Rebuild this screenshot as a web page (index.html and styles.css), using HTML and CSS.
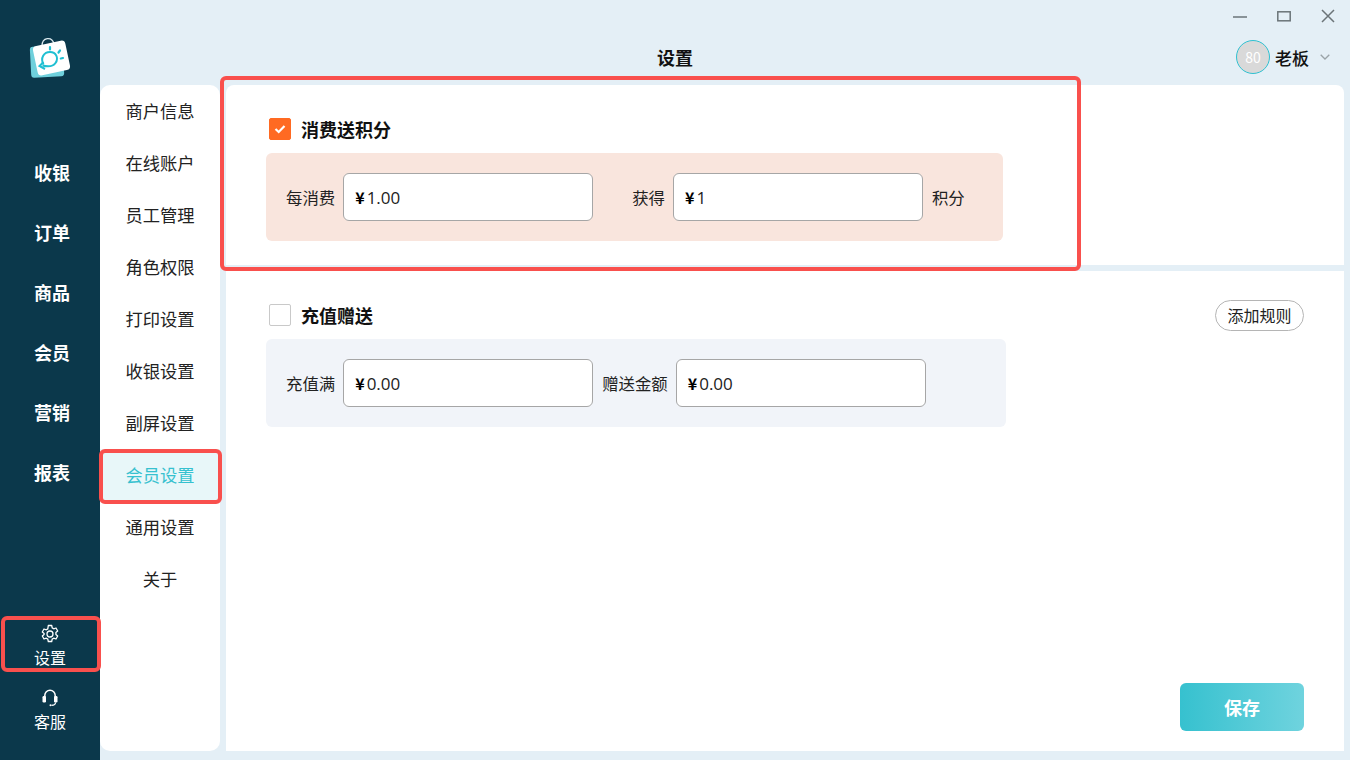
FILE: index.html
```html
<!DOCTYPE html>
<html lang="zh-CN">
<head>
<meta charset="utf-8">
<title>设置</title>
<link rel="stylesheet" href="styles.css">
</head>
<body>
<div class="app">
  <aside class="sidebar">
    <div class="logo">
      <svg width="44" height="44" viewBox="0 0 44 44" fill="none">
        <rect x="2.500" y="11" width="33" height="31" rx="3" fill="#6fd0dc" transform="rotate(-3 19 26)"/>
        <path d="M14 11 C14 2 24 1 26 9" stroke="#dbe9ee" stroke-width="1.300"/>
        <rect x="7" y="8" width="33" height="30" rx="4" fill="#fff" transform="rotate(-12 23.500 23)"/>
        <path d="M15.500 29.500 C12 23 16 17 22 17 C28 17 31 23 27.500 28 C25 31.500 20 32 14.500 30.500" stroke="#1fbfd2" stroke-width="2"/>
        <path d="M17 34 L11.500 31 L15.500 27" stroke="#1fbfd2" stroke-width="2"/>
        <path d="M22 12 L22 14.500 M32 15.500 L30.500 17.500 M35 23 L32.800 23.500" stroke="#1fbfd2" stroke-width="2.200" stroke-linecap="round"/>
      </svg>
    </div>
    <nav class="main-nav">
      <a class="main-item">收银</a>
      <a class="main-item">订单</a>
      <a class="main-item">商品</a>
      <a class="main-item">会员</a>
      <a class="main-item">营销</a>
      <a class="main-item">报表</a>
    </nav>
    <div class="side-bottom">
      <a class="side-tool">
        <svg width="20" height="20" viewBox="0 0 20 20" fill="none" stroke="#fff" stroke-width="1.300" stroke-linejoin="round">
          <path d="M8.300 1.500h3.400l.5 2.400 1.500.9 2.300-.8 1.700 3-1.800 1.600v1.800l1.800 1.600-1.700 3-2.300-.8-1.500.9-.5 2.400H8.300l-.5-2.400-1.500-.9-2.300.8-1.700-3 1.800-1.600V9.600L2.300 8l1.700-3 2.300.8 1.500-.9z"/>
          <circle cx="10" cy="10" r="3"/>
        </svg>
        <span>设置</span>
      </a>
      <a class="side-tool">
        <svg width="20" height="20" viewBox="0 0 20 20" fill="none">
          <path d="M4.800 9.500V7.500a5.200 5.200 0 0 1 10.400 0v2" stroke="#fff" stroke-width="1.500"/>
          <rect x="2.500" y="8" width="3.500" height="6.500" rx="1.200" fill="#fff"/>
          <rect x="14" y="8" width="3.500" height="6.500" rx="1.200" fill="#fff"/>
          <path d="M15.500 14.500c0 2-2 2.800-4 2.800" stroke="#fff" stroke-width="1.200"/>
          <circle cx="10.500" cy="17.300" r="1" fill="#fff"/>
        </svg>
        <span>客服</span>
      </a>
    </div>
  </aside>

  <div class="content">
    <div class="titlebar">
      <svg class="win" width="14" height="14" viewBox="0 0 14 14"><path d="M0 8h14" stroke="#6b7478" stroke-width="1.500"/></svg>
      <svg class="win" width="14" height="14" viewBox="0 0 14 14" fill="none"><rect x=".8" y="2.800" width="12.400" height="9" stroke="#6b7478" stroke-width="1.500"/></svg>
      <svg class="win" width="14" height="14" viewBox="0 0 14 14"><path d="M1 1l12 12M13 1L1 13" stroke="#6b7478" stroke-width="1.500"/></svg>
    </div>
    <header class="header">
      <h1 class="page-title">设置</h1>
      <div class="user">
        <span class="avatar">80</span>
        <span class="user-name">老板</span>
        <svg width="10" height="6" viewBox="0 0 10 6" fill="none"><path d="M.7.7 5 5l4.300-4.300" stroke="#9aa3a8" stroke-width="1.300"/></svg>
      </div>
    </header>

    <div class="body">
      <nav class="sub-nav">
        <a class="sub-item">商户信息</a>
        <a class="sub-item">在线账户</a>
        <a class="sub-item">员工管理</a>
        <a class="sub-item">角色权限</a>
        <a class="sub-item">打印设置</a>
        <a class="sub-item">收银设置</a>
        <a class="sub-item">副屏设置</a>
        <a class="sub-item active">会员设置</a>
        <a class="sub-item">通用设置</a>
        <a class="sub-item">关于</a>
      </nav>

      <main class="main">
        <section class="card card-points">
          <div class="rule-head">
            <span class="check checked">
              <svg width="14" height="12" viewBox="0 0 14 12" fill="none"><path d="M2.500 6l3.200 3 5.800-6" stroke="#fff" stroke-width="2.200"/></svg>
            </span>
            <span class="rule-title">消费送积分</span>
          </div>
          <div class="panel panel-orange">
            <span class="label">每消费</span>
            <div class="field"><b class="yen">¥</b>1.00</div>
            <span class="label label-earn">获得</span>
            <div class="field"><b class="yen">¥</b>1</div>
            <span class="label">积分</span>
          </div>
        </section>

        <section class="card card-recharge">
          <div class="rule-head">
            <span class="check"></span>
            <span class="rule-title">充值赠送</span>
            <button class="add-btn">添加规则</button>
          </div>
          <div class="panel panel-grey">
            <span class="label">充值满</span>
            <div class="field"><b class="yen">¥</b>0.00</div>
            <span class="label">赠送金额</span>
            <div class="field"><b class="yen">¥</b>0.00</div>
          </div>
          <div class="card-foot">
            <button class="save-btn">保存</button>
          </div>
        </section>
      </main>
    </div>
  </div>
</div>

<div class="mark mark-tool"></div>
<div class="mark mark-menu"></div>
<div class="mark mark-card"></div>
</body>
</html>
```

FILE: styles.css
```css
* { box-sizing: border-box; }

html, body { height: 100%; }

body {
  margin: 0;
  overflow: hidden;
  background: #e4eff6;
  color: #111;
  font-family: "Noto Sans CJK SC", "Noto Sans", sans-serif;
}

.app {
  display: flex;
  width: 1350px;
  height: 760px;
}

/* primary sidebar */
.sidebar {
  display: flex;
  flex-direction: column;
  flex: 0 0 100px;
  padding-top: 35px;
  background: #0b384b;
  color: #fff;
}

.logo {
  display: flex;
  justify-content: center;
  height: 44px;
}

.main-nav {
  display: flex;
  flex-direction: column;
  margin-top: 63px;
}

.main-item {
  height: 60px;
  padding-left: 4px;
  font-size: 18px;
  font-weight: 700;
  line-height: 60px;
  text-align: center;
}

.side-bottom {
  display: flex;
  flex-direction: column;
  gap: 19px;
  margin-top: auto;
  padding-bottom: 27px;
}

.side-tool {
  display: flex;
  flex-direction: column;
  align-items: center;
  gap: 1px;
  font-size: 16px;
  line-height: 24px;
}

/* top area */
.content {
  display: flex;
  flex-direction: column;
  flex: 1;
  min-width: 0;
}

.titlebar {
  display: flex;
  justify-content: flex-end;
  gap: 30px;
  height: 32px;
  padding: 9px 15px 0 0;
}

.header {
  display: flex;
  align-items: center;
  height: 53px;
  padding: 0 20px 3px 557px;
}

.page-title {
  margin: 0;
  font-size: 18px;
  font-weight: 700;
  line-height: 26px;
}

.user {
  display: flex;
  align-items: center;
  margin-left: auto;
}

.avatar {
  display: flex;
  align-items: center;
  justify-content: center;
  width: 34px;
  height: 34px;
  border: 1px solid #2fc1d1;
  border-radius: 50%;
  background: #d9d9d9;
  color: #fff;
  font-size: 14px;
}

.user-name {
  margin: 0 11px 0 5px;
  font-size: 17px;
  font-weight: 500;
}

/* body */
.body {
  display: flex;
  flex: 1;
  gap: 6px;
  padding: 0 6px 9px 0;
  min-height: 0;
}

.sub-nav {
  display: flex;
  flex-direction: column;
  flex: 0 0 120px;
  border-radius: 10px;
  background: #fff;
}

.sub-item {
  height: 52px;
  color: #222;
  font-size: 17.300px;
  line-height: 52px;
  text-align: center;
}

.sub-item.active {
  background: #e8f7f9;
  color: #36c1cf;
}

.main {
  display: flex;
  flex-direction: column;
  flex: 1;
  gap: 6px;
  min-width: 0;
}

.card {
  padding: 33px 40px 0;
  background: #fff;
}

.card-points {
  flex: 0 0 180px;
  border-radius: 8px 8px 0 0;
}

.card-recharge {
  display: flex;
  flex-direction: column;
  flex: 1;
  padding-top: 33px;
  padding-bottom: 20px;
}

.rule-head {
  display: flex;
  align-items: center;
  gap: 10px;
  height: 22px;
  padding-left: 3px;
}

.check {
  display: flex;
  align-items: center;
  justify-content: center;
  width: 22px;
  height: 22px;
  border: 1px solid #c9c9c9;
  border-radius: 2px;
  background: #fff;
}

.check.checked {
  border-color: #ff6a22;
  background: #ff6a22;
}

.rule-title {
  font-size: 18px;
  font-weight: 700;
  line-height: 22px;
}

.add-btn {
  width: 89px;
  height: 31px;
  margin-left: auto;
  padding: 0;
  border: 1px solid #b5b5b5;
  border-radius: 16px;
  background: #fff;
  color: #222;
  font: 16px "Noto Sans CJK SC", sans-serif;
}

.panel {
  display: flex;
  align-items: center;
  height: 88px;
  margin-top: 13px;
  padding: 0 20px;
  border-radius: 6px;
}

.panel-orange {
  width: 737px;
  background: #f9e5dd;
}

.panel-grey {
  width: 740px;
  background: #f1f4f9;
}

.label {
  margin-right: 8px;
  color: #222;
  font-size: 16.400px;
  white-space: nowrap;
}

.label-earn {
  margin-left: 30px;
}

.field {
  width: 250px;
  height: 48px;
  margin-right: 9px;
  padding-left: 11px;
  border: 1px solid #a6a6a6;
  border-radius: 6px;
  background: #fff;
  color: #222;
  font-family: "Open Sans", "Noto Sans", sans-serif;
  font-size: 17px;
  line-height: 46px;
}

.yen {
  margin-right: 2px;
  color: #000;
  font-family: "Noto Sans CJK SC", sans-serif;
  font-size: 16px;
  font-weight: 700;
}

.card-foot {
  display: flex;
  justify-content: flex-end;
  margin-top: auto;
}

.save-btn {
  width: 124px;
  height: 48px;
  padding: 0;
  border: 0;
  border-radius: 6px;
  background: linear-gradient(90deg, #36c1cf, #6fd3de);
  color: #fff;
  font: 700 18px "Noto Sans CJK SC", sans-serif;
}

/* red annotation frames that lie over the page */
.mark {
  position: absolute;
  border: 4px solid #f9504d;
  border-radius: 6px;
  pointer-events: none;
}

.mark-tool { left: 1px; top: 616px; width: 100px; height: 56px; }
.mark-menu { left: 99px; top: 449px; width: 123px; height: 55px; }
.mark-card { left: 220px; top: 76px; width: 861px; height: 195px; }
```
